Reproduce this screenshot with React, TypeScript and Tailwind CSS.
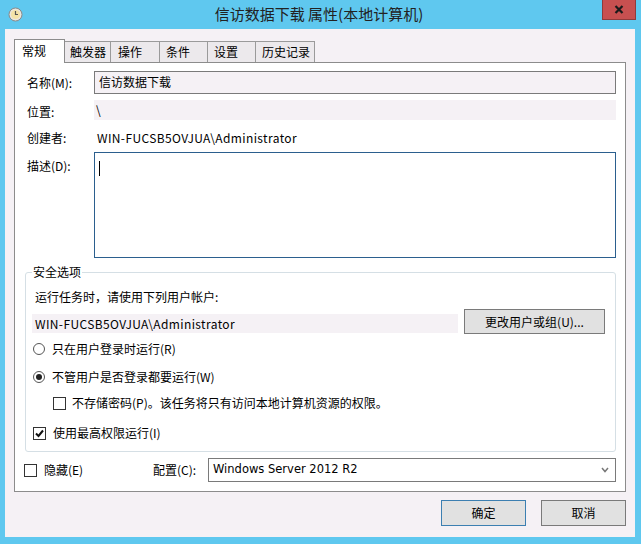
import React from "react";

const font = { fontFamily: '"Noto Sans CJK SC", "Noto Sans", sans-serif' };

function Radio({ checked }: { checked?: boolean }) {
  return (
    <span className="w-[12px] h-[12px] rounded-full border border-[#555] bg-white flex items-center justify-center shrink-0">
      {checked && <span className="w-[6px] h-[6px] rounded-full bg-[#222]" />}
    </span>
  );
}

function Check({ checked }: { checked?: boolean }) {
  return (
    <span className="w-[13px] h-[13px] border border-[#333] bg-white flex items-center justify-center shrink-0">
      {checked && (
        <svg width="11" height="11" viewBox="0 0 11 11">
          <path d="M2 5.5 L4.5 8 L9 2.5" fill="none" stroke="#111" strokeWidth="2" />
        </svg>
      )}
    </span>
  );
}

export default function App() {
  const tabs = [
    { t: "触发器", w: "w-[46px]", pl: "pl-[5px]" },
    { t: "操作", w: "w-[49px]", pl: "pl-[7px]" },
    { t: "条件", w: "w-[48px]", pl: "pl-[6px]" },
    { t: "设置", w: "w-[48px]", pl: "pl-[6px]" },
    { t: "历史记录", w: "w-[59px]", pl: "pl-[6px]" },
  ];
  return (
    <div className="w-[641px] h-[544px] bg-[#5fc8ef] flex flex-col text-[12px] text-black" style={font}>
      {/* title bar */}
      <div className="h-[29px] flex items-start relative shrink-0">
        <div className="w-[28px] h-[28px] flex items-center justify-center pl-[2px]">
          <svg width="15" height="15" viewBox="0 0 15 15">
            <circle cx="7.5" cy="7.5" r="6.5" fill="#e9e6df" stroke="#8a8a8a" strokeWidth="1" />
            <circle cx="7.5" cy="7.5" r="4.6" fill="#f4e3a8" />
            <path d="M7.5 4 V7.5 H10" fill="none" stroke="#555" strokeWidth="1.2" />
          </svg>
        </div>
        <div className="flex-1 text-center text-[15px] text-[#222] leading-[28px] pl-[8px]">
          信访数据下载 属性(本地计算机)
        </div>
        <div className="w-[34px] h-[20px] mr-[5px] bg-[#c75050] border border-[#8f3b3b] border-t-0 flex items-center justify-center">
          <svg width="10" height="9" viewBox="0 0 10 9">
            <path d="M1.5 1 L8.5 8 M8.5 1 L1.5 8" stroke="#1a1a1a" strokeWidth="2.2" />
          </svg>
        </div>
      </div>

      {/* client */}
      <div className="ml-[5px] mr-[6px] h-[508px] bg-[#f5f1f5] flex flex-col px-[9px] pt-[10px]">
        {/* tabs */}
        <div className="flex items-end h-[24px] relative z-10">
          <div className="w-[51px] h-[24px] bg-white border border-b-0 border-[#8c8c8c] pl-[7px] pt-[2px] leading-[18px]">
            常规
          </div>
          {tabs.map((t) => (
            <div
              key={t.t}
              className={`${t.w} ${t.pl} h-[21px] mb-px bg-[#ece9ec] border-t border-r border-[#9a9a9a] leading-[19px]`}
            >
              {t.t}
            </div>
          ))}
        </div>

        {/* panel */}
        <div className="-mt-px h-[430px] bg-white border border-[#8c8c8c] flex flex-col pl-[12px] pr-[9px]">
          {/* name */}
          <div className="flex items-center mt-[8px] h-[23px]">
            <div className="w-[67px]">名称(M):</div>
            <div className="flex-1 h-[23px] border border-[#7a7a7a] bg-[#f5f1f5] pl-[4px] leading-[20px]">信访数据下载</div>
          </div>
          {/* location */}
          <div className="flex items-center mt-[6px] h-[20px]">
            <div className="w-[67px] pt-[3px]">位置:</div>
            <div className="flex-1 h-[20px] bg-[#f5f1f5] pl-[2px] leading-[20px]">\</div>
          </div>
          {/* creator */}
          <div className="flex items-center mt-[8px] h-[20px]">
            <div className="w-[67px]">创建者:</div>
            <div className="flex-1 pl-[3px] tracking-[0.38px]">WIN-FUCSB5OVJUA\Administrator</div>
          </div>
          {/* description */}
          <div className="flex items-start mt-[4px] h-[106px]">
            <div className="w-[67px] pt-[5px]">描述(D):</div>
            <div className="flex-1 h-[106px] border border-[#2b5f8e] bg-white pl-[4px] pt-[8px]">
              <span className="block w-px h-[15px] bg-black" />
            </div>
          </div>

          {/* security group */}
          <div className="-ml-[2px] mt-[14px] h-[180px] border border-[#d5dfe5] rounded-[3px] relative flex flex-col">
            <span className="absolute -top-[9px] left-[6px] bg-white px-[1px] leading-[16px]">安全选项</span>
            <div className="mt-[16px] pl-[9px] h-[16px] leading-[16px]">运行任务时，请使用下列用户帐户:</div>
            <div className="mt-[4px] flex items-center h-[25px] pl-[6px]">
              <div className="w-[426px] h-[19px] mt-[3px] bg-[#f5f1f5] pl-[3px] leading-[19px] tracking-[0.38px]">WIN-FUCSB5OVJUA\Administrator</div>
              <div className="ml-[6px] w-[141px] h-[25px] bg-[#e1e1e1] border border-[#7a7a7a] text-center leading-[23px]">
                更改用户或组(U)...
              </div>
            </div>
            <div className="mt-[7px] flex items-center h-[16px] pl-[7px] gap-[7px]">
              <Radio />
              <span>只在用户登录时运行(R)</span>
            </div>
            <div className="mt-[12px] flex items-center h-[16px] pl-[7px] gap-[7px]">
              <Radio checked />
              <span>不管用户是否登录都要运行(W)</span>
            </div>
            <div className="mt-[10px] flex items-center h-[16px] pl-[27px] gap-[6px]">
              <Check />
              <span>不存储密码(P)。该任务将只有访问本地计算机资源的权限。</span>
            </div>
            <div className="mt-[14px] flex items-center h-[16px] pl-[7px] gap-[7px]">
              <Check checked />
              <span>使用最高权限运行(I)</span>
            </div>
          </div>

          {/* bottom row */}
          <div className="mt-[6px] h-[24px] flex items-center -ml-[3px]">
            <Check />
            <span className="ml-[7px] w-[109px]">隐藏(E)</span>
            <span className="w-[55px]">配置(C):</span>
            <div className="flex-1 h-[24px] border border-[#7a7a7a] bg-white flex items-center pl-[4px] pr-[6px]">
              <span className="flex-1 text-[11.5px]" style={{ fontFamily: '"DejaVu Sans", sans-serif' }}>
                Windows Server 2012 R2
              </span>
              <svg width="8" height="6" viewBox="0 0 8 6">
                <path d="M1 1 L4 4.5 L7 1" fill="none" stroke="#777" strokeWidth="1.5" />
              </svg>
            </div>
          </div>
        </div>

        {/* buttons */}
        <div className="mt-[8px] flex justify-end gap-[15px]">
          <div className="w-[85px] h-[26px] bg-[#e1e1e1] border border-[#3c7fb1] text-center leading-[24px]">确定</div>
          <div className="w-[85px] h-[26px] bg-[#e1e1e1] border border-[#7a7a7a] text-center leading-[24px]">取消</div>
        </div>
      </div>
    </div>
  );
}
